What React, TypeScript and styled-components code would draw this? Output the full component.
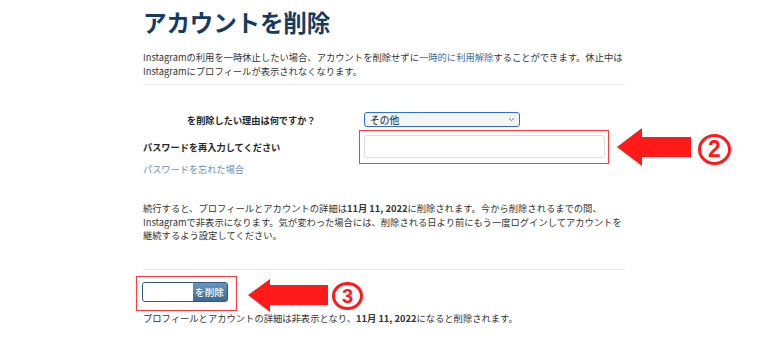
import React from "react";
import styled, { createGlobalStyle } from "styled-components";
import { ChevronDown } from "lucide-react";

const GlobalStyle = createGlobalStyle`
  html, body { margin: 0; padding: 0; background: #ffffff; }
  body {
    font-family: "Noto Sans CJK JP", "Noto Sans", "Liberation Sans", sans-serif;
    color: #262626;
  }
  * { box-sizing: border-box; }
`;

const Page = styled.div`
  position: relative;
  width: 768px;
  height: 363px;
  overflow: hidden;
  background: #fff;
`;

const Content = styled.div`
  margin-left: 143px;
  width: 482px;
  padding-top: 8px;
`;

const Title = styled.h1`
  margin: 0;
  font-size: 23.6px;
  line-height: 28px;
  font-weight: 700;
  color: #173b60;
  letter-spacing: -0.2px;
`;

const Section = styled.div<{ $top: number; $bottom: number }>`
  margin-top: ${(p) => p.$top}px;
  padding-bottom: ${(p) => p.$bottom}px;
  border-bottom: 1px solid #e6e6e6;
`;

const Text = styled.p<{ $lh?: number }>`
  margin: 0;
  font-size: 9.3px;
  line-height: ${(p) => p.$lh ?? 14}px;
  color: #333;
  white-space: nowrap;
`;

const Link = styled.a<{ $tone?: "strong" | "soft" }>`
  color: ${(p) => (p.$tone === "soft" ? "#6b8db3" : "#3d6e9f")};
  text-decoration: none;
`;

const Form = styled.div`
  margin-top: 27px;
  display: grid;
  grid-template-columns: 216px 250px;
  row-gap: 3px;
  align-items: center;
`;

const Label = styled.label<{ $indent?: number }>`
  font-size: 9.2px;
  line-height: 14px;
  font-weight: 700;
  color: #262626;
  padding-left: ${(p) => p.$indent ?? 0}px;
  white-space: nowrap;
`;

const SelectWrap = styled.div`
  position: relative;
  margin-left: 5px;
  width: 156px;
  height: 15px;
`;

const Select = styled.select`
  display: block;
  appearance: none;
  -webkit-appearance: none;
  width: 100%;
  height: 100%;
  margin: 0;
  padding: 0 0 0 5px;
  border: 1.5px solid #2f6fd0;
  border-radius: 3px;
  background: #f4f5f7;
  font-family: inherit;
  font-size: 9.8px;
  line-height: 12px;
  color: #222;
  outline: none;
`;

const SelectChevron = styled.span`
  position: absolute;
  right: 4px;
  top: 3px;
  display: flex;
  color: #555;
  pointer-events: none;
`;

const Highlight = styled.div`
  border: 1.5px solid #ff3b3b;
  padding: 3.5px 3px 5.5px 3.5px;
`;

const Input = styled.input`
  display: block;
  width: 100%;
  height: 23px;
  margin: 0;
  border: 1px solid #dcdcdc;
  border-radius: 3px;
  background: #fff;
  outline: none;
`;

const Forgot = styled.div`
  font-size: 9.2px;
  line-height: 10px;
`;

const ButtonHighlight = styled.div`
  margin: 6px 0 0 -7px;
  width: 101px;
  height: 35px;
  border: 1.5px solid #ff3b3b;
  padding: 5.5px 0 0 4.5px;
`;

const DeleteButton = styled.button`
  display: flex;
  align-items: stretch;
  width: 86px;
  height: 20px;
  margin: 0;
  padding: 0;
  border: 1px solid #2e5a86;
  border-radius: 3px;
  overflow: hidden;
  background: linear-gradient(#6a94bd, #3e6994);
  font-family: inherit;
  cursor: pointer;
`;

const Redacted = styled.span`
  width: 50px;
  background: #fff;
`;

const ButtonLabel = styled.span`
  flex: 1;
  display: flex;
  align-items: center;
  justify-content: center;
  font-size: 9.6px;
  font-weight: 500;
  color: #fff;
`;

const Arrow = styled.svg<{ $x: number; $y: number }>`
  position: absolute;
  left: ${(p) => p.$x}px;
  top: ${(p) => p.$y}px;
`;

const StepMark = styled.span<{ $x: number; $y: number; $w: number; $h: number }>`
  position: absolute;
  left: ${(p) => p.$x}px;
  top: ${(p) => p.$y}px;
  width: ${(p) => p.$w}px;
  height: ${(p) => p.$h}px;
  border: 3px solid #ff1a1a;
  border-radius: 50%;
  display: flex;
  align-items: center;
  justify-content: center;
  font-family: "Liberation Sans", "Noto Sans", sans-serif;
  font-weight: 700;
  font-size: ${(p) => p.$h - 8}px;
  line-height: 1;
  color: #ff1a1a;
`;

export default function App() {
  return (
    <>
      <GlobalStyle />
      <Page>
        <Content>
          <Title>アカウントを削除</Title>
          <Section $top={14} $bottom={6}>
            <Text>
              Instagramの利用を一時休止したい場合、アカウントを削除せずに
              <Link href="#">一時的に利用解除</Link>
              することができます。休止中は
              <br />
              Instagramにプロフィールが表示されなくなります。
            </Text>
          </Section>

          <Form>
            <Label $indent={44}>を削除したい理由は何ですか？</Label>
            <SelectWrap>
              <Select defaultValue="other">
                <option value="other">その他</option>
              </Select>
              <SelectChevron>
                <ChevronDown size={9} strokeWidth={2} />
              </SelectChevron>
            </SelectWrap>
            <Label>パスワードを再入力してください</Label>
            <Highlight>
              <Input type="password" />
            </Highlight>
          </Form>
          <Forgot>
            <Link href="#" $tone="soft">
              パスワードを忘れた場合
            </Link>
          </Forgot>

          <Section $top={28} $bottom={26}>
            <Text $lh={13.5}>
              続行すると、プロフィールとアカウントの詳細は<b>11月 11, 2022</b>
              に削除されます。今から削除されるまでの間、
              <br />
              Instagramで非表示になります。気が変わった場合には、削除される日より前にもう一度ログインしてアカウントを
              <br />
              継続するよう設定してください。
            </Text>
          </Section>

          <ButtonHighlight>
            <DeleteButton type="button">
              <Redacted />
              <ButtonLabel>を削除</ButtonLabel>
            </DeleteButton>
          </ButtonHighlight>
          <Text>
            プロフィールとアカウントの詳細は非表示となり、<b>11月 11, 2022</b>
            になると削除されます。
          </Text>
        </Content>

        <Arrow $x={616} $y={127} width={76} height={40} viewBox="0 0 76 40">
          <polygon points="1,20 26,1 26,10 75,10 75,30 26,30 26,39" fill="#ff1a1a" />
        </Arrow>
        <StepMark $x={698} $y={134} $w={33} $h={31}>
          2
        </StepMark>

        <Arrow $x={247} $y={278} width={82} height={35} viewBox="0 0 82 35">
          <polygon points="1,17 23,1 23,7 81,7 81,27 23,27 23,34" fill="#ff1a1a" />
        </Arrow>
        <StepMark $x={332} $y={282} $w={31} $h={28}>
          3
        </StepMark>
      </Page>
    </>
  );
}
